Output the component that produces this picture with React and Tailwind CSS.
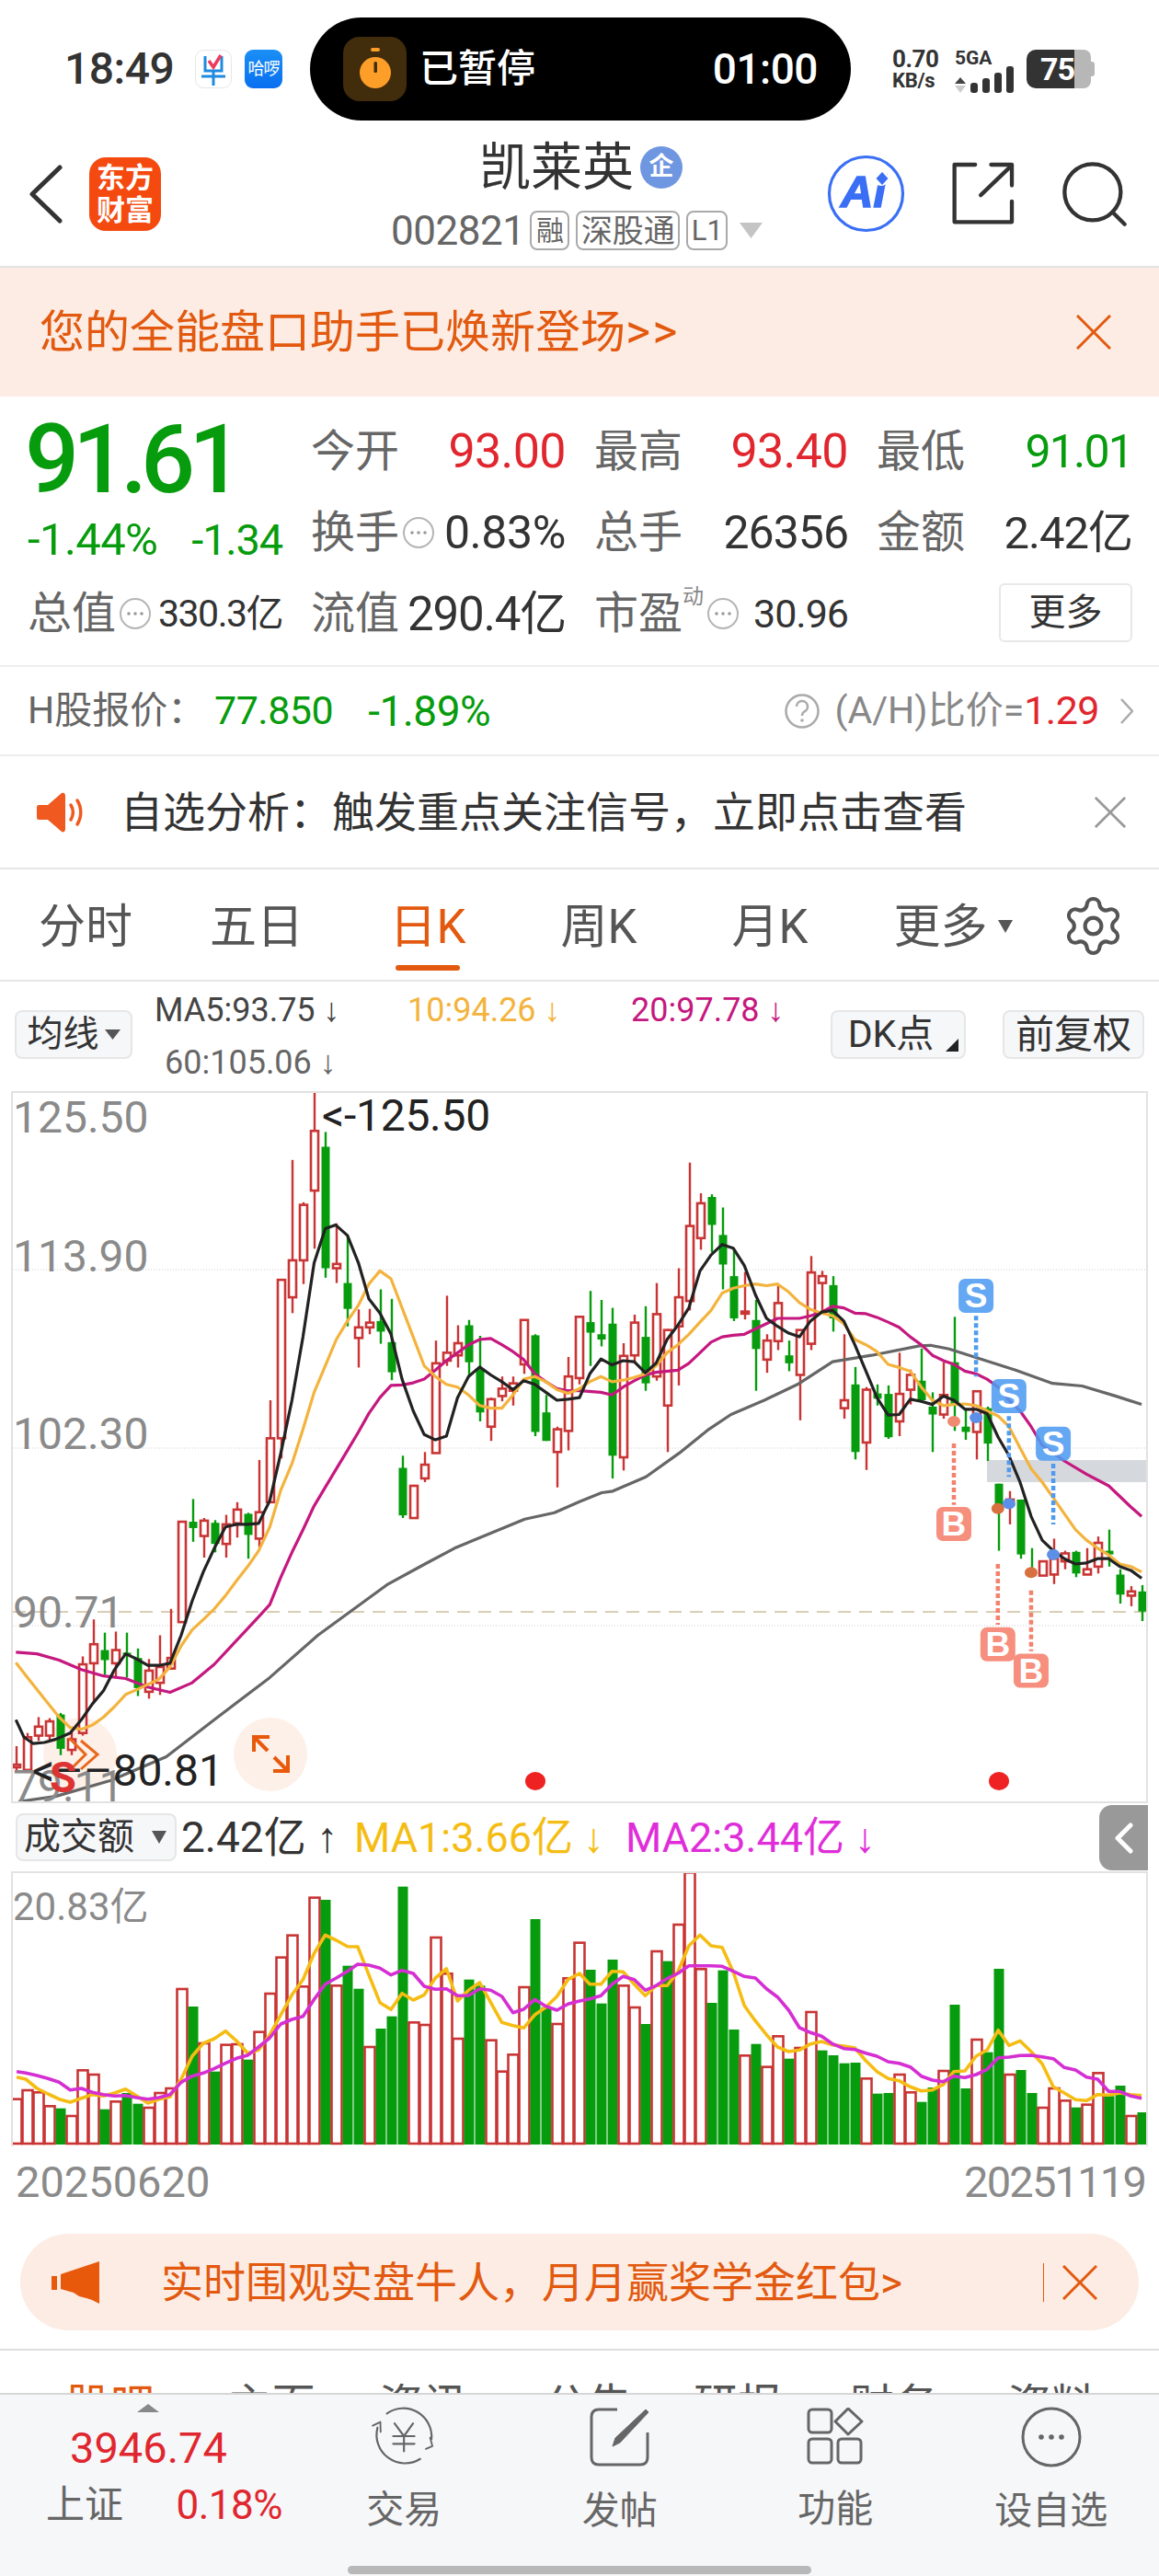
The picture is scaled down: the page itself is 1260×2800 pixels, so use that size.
import { Settings } from "lucide-react";

// [high, top, bottom, low, 1 = red / 0 = green], measured on the crops, x = 18 + 12 * index
const candles = [
  [1425,1460,1465,1475,1],[1400,1408,1470,1475,1],[1370,1388,1405,1415,1],[1372,1378,1405,1415,1],[1362,1365,1430,1442,0],
  [1395,1412,1432,1442,1],[1255,1270,1400,1405,1],[1185,1232,1268,1340,1],[1210,1243,1262,1290,0],[1208,1243,1268,1295,1],
  [1210,1248,1250,1295,0],[1240,1258,1315,1330,0],[1260,1282,1322,1335,1],[1215,1275,1305,1328,1],[1165,1258,1278,1280,1],
  [1000,1000,1190,1190,1],[957,1000,1012,1038,0],[993,998,1027,1068,1],[997,1002,1042,1058,0],[987,1005,1042,1068,1],
  [963,977,1003,1030,1],[983,985,1025,1070,0],[883,982,1032,1048,1],[770,842,963,965,1],[540,542,842,880,1],
  [315,505,575,605,1],[395,400,505,550,1],[185,260,373,483,1],[262,290,520,538,0],[435,512,520,548,1],
  [460,548,597,630,0],[598,632,652,708,1],[597,623,632,645,1],[560,620,640,663,0],[578,660,717,732,0],
  [875,898,988,993,0],[930,932,993,993,1],[868,892,918,925,1],[657,700,870,870,1],[572,680,695,705,1],
  [628,662,685,708,1],[618,628,698,725,0],[648,710,793,810,0],[765,768,820,847,1],[725,748,762,772,1],
  [725,738,752,780,1],[618,618,702,720,1],[645,647,830,838,0],[760,793,847,847,0],[820,825,868,935,1],
  [688,725,828,865,1],[612,612,728,740,1],[563,622,642,705,0],[580,645,655,668,0],[595,625,875,918,0],
  [662,686,878,903,1],[608,623,685,700,1],[592,650,738,752,0],[548,607,725,733,1],[635,637,780,868,1],
  [520,575,630,742,1],[320,440,582,600,1],[378,397,463,485,1],[380,385,438,490,0],[405,457,513,560,0],
  [485,535,615,620,0],[527,602,606,617,1],[580,618,673,752,0],[645,657,693,718,1],[553,586,658,675,1],
  [657,685,700,715,0],[637,637,722,808,1],[497,528,663,675,1],[525,535,548,605,1],[535,552,615,640,0],
  [645,770,785,805,1],[707,740,868,882,0],[745,750,850,902,1],[740,757,767,780,0],[742,758,840,843,0],
  [680,758,810,838,1],[712,722,750,778,1],[672,733,770,775,0],[755,782,797,868,0],[698,760,797,805,1],
  [612,698,778,828,0],[785,820,830,845,0],[752,753,830,882,1],[782,785,852,885,0],[928,928,975,1055,0],
  [942,958,968,1005,1],[958,958,1062,1070,0],[1050,1090,1103,1105,0],[1075,1075,1102,1102,1],[1032,1070,1100,1118,1],
  [1055,1060,1075,1090,1],[1055,1057,1098,1105,0],[1050,1090,1100,1100,1],[1028,1040,1085,1098,1],[1015,1055,1062,1085,0],
  [1090,1100,1138,1155,0],[1122,1132,1140,1160,1],[1120,1132,1170,1188,0],
];

// [top, 1 = red / 0 = green]
const volumes = [
  [962,1],[933,1],[940,1],[985,1],[995,0],[1017,1],[868,1],[882,1],[998,0],[970,1],[945,0],[980,0],[990,1],[942,1],[927,1],
  [603,1],[663,0],[780,1],[875,0],[785,1],[783,1],[836,0],[743,1],[618,1],[500,1],[428,1],[595,1],[305,1],[315,0],[592,1],
  [530,0],[605,0],[792,1],[735,0],[695,0],[272,0],[712,1],[720,1],[435,1],[553,1],[765,1],[575,0],[595,0],[770,1],[872,1],
  [817,1],[597,1],[378,0],[665,0],[717,1],[568,1],[452,1],[543,0],[653,0],[510,0],[592,1],[663,1],[720,0],[480,1],[515,0],
  [393,1],[223,1],[538,1],[651,0],[545,0],[738,0],[820,1],[785,0],[857,1],[757,1],[833,0],[795,1],[678,1],[806,0],[822,0],
  [848,0],[846,0],[895,1],[947,0],[945,0],[882,1],[940,1],[974,0],[927,0],[870,1],[657,0],[930,0],[768,1],[812,0],[540,0],
  [882,1],[870,0],[945,0],[990,1],[927,1],[967,1],[992,0],[980,1],[877,1],[955,0],[921,0],[1017,1],[1008,0],
];

const ma5L = "43,1375 65,1408 90,1420 120,1418 150,1412 190,1400 220,1375 250,1345 280,1320 310,1280 340,1250 370,1260 400,1272 430,1272 460,1268 490,1215 520,1150 550,1095 580,1050 610,1010 640,1005 670,1005 700,1003 730,960 760,870 790,770 820,650 850,510 880,445 908,438 940,458 970,510 998,578 1028,605 1058,645 1088,730 1118,790 1148,835 1178,845 1208,838 1238,765 1268,725 1298,707 1328,722 1358,735 1388,750 1417,733 1447,740 1477,755 1507,770 1537,768";
const ma5R = "0,765 28,720 58,692 88,703 118,695 148,697 178,718 207,700 237,655 266,628 296,595 326,525 356,495 386,475 416,482 446,515 476,570 506,615 536,630 566,643 595,650 625,620 655,603 685,600 715,620 745,665 775,715 805,765 835,798 865,797 895,768 925,772 955,778 985,762 1013,770 1043,787 1073,787 1103,795 1133,840 1162,875 1192,925 1222,990 1252,1035 1282,1055 1312,1070 1342,1080 1372,1078 1402,1070 1432,1070 1462,1085 1492,1092 1521,1107";
const ma10L = "43,1267 80,1300 120,1335 160,1370 190,1390 220,1393 250,1385 280,1370 310,1350 340,1327 370,1318 400,1308 430,1298 460,1275 490,1235 520,1205 550,1185 580,1165 610,1140 640,1112 670,1085 700,1055 730,1010 760,940 790,890 820,825 850,755 880,705 910,655 940,620 970,590 998,550 1028,525 1058,540 1088,595 1118,650 1148,705 1178,725 1208,740 1238,745 1268,760 1298,780 1328,785 1358,785 1388,760 1417,730 1447,725 1477,735 1507,750 1537,757";
const ma10R = "0,748 28,735 58,725 88,735 118,732 148,727 178,720 207,705 237,680 266,665 296,645 326,622 356,600 386,567 416,558 446,553 476,550 506,553 536,550 566,565 595,585 625,598 655,605 685,610 715,625 745,655 775,665 805,678 835,702 865,708 895,715 925,745 955,770 985,780 1013,778 1043,777 1073,780 1103,790 1133,800 1162,820 1192,860 1222,900 1252,925 1282,955 1312,985 1342,1015 1372,1035 1402,1050 1432,1063 1462,1080 1492,1085 1521,1095";
const ma20L = "43,1247 100,1250 160,1262 220,1280 280,1292 340,1297 400,1313 460,1323 520,1305 580,1270 640,1225 700,1180 730,1157 760,1105 790,1058 820,1015 850,970 880,935 910,900 940,865 970,830 998,795 1028,765 1058,742 1088,741 1118,737 1148,730 1178,713 1208,695 1238,680 1268,665 1298,655 1328,653 1358,665 1388,678 1417,693 1447,720 1477,735 1507,748 1537,752";
const ma20R = "0,752 58,755 88,760 118,745 148,733 178,722 207,717 266,713 296,700 326,680 356,660 386,650 416,647 446,645 476,635 506,625 536,615 595,615 625,610 655,603 685,592 715,595 745,605 775,606 805,613 835,622 865,632 895,650 925,665 955,685 985,695 1013,702 1043,715 1073,720 1103,730 1133,745 1162,770 1192,790 1222,820 1252,855 1282,870 1312,885 1372,910 1432,932 1462,952 1492,972 1521,990";
const ma60L = "50,1530 150,1520 300,1490 450,1445 580,1375 730,1295 860,1215 1050,1118 1150,1080 1230,1050 1420,995 1500,983";
const ma60R = "0,962 60,945 90,942 180,915 270,870 350,825 410,797 500,770 590,740 685,697 790,685 920,667 950,666 1000,673 1090,693 1180,713 1280,738 1360,743 1450,762 1521,778";

const ma1L = "45,893 70,900 100,930 130,948 160,965 190,975 220,962 250,950 280,955 310,945 340,932 370,955 400,978 430,965 460,958 490,900 520,825 550,783 580,768 610,743 640,775 670,815 700,805 730,755 760,690 790,625 820,575 850,490 880,430 910,447 940,467 968,468 998,560 1028,650 1058,673 1088,620 1118,642 1148,625 1178,570 1208,540 1238,645 1268,610 1298,585 1328,650 1358,715 1388,725 1417,733 1447,690 1477,665 1507,630 1537,575";
const ma1R = "0,555 28,590 58,590 88,548 118,550 148,590 178,628 207,595 237,595 266,550 296,465 326,430 356,465 386,470 416,550 446,660 476,710 506,755 536,795 566,810 595,805 625,785 655,777 685,788 715,792 745,798 775,840 805,875 835,898 865,905 895,925 925,938 955,935 985,917 1013,875 1043,873 1073,825 1103,805 1133,740 1162,790 1192,775 1222,810 1252,850 1282,925 1312,945 1342,967 1372,970 1402,950 1432,952 1462,945 1492,950 1521,953";
const ma2L = "45,875 70,880 100,888 130,898 160,910 190,935 220,930 250,943 280,950 310,955 340,953 370,960 400,965 430,960 460,950 490,910 520,890 550,880 580,865 610,848 640,832 670,822 700,795 730,765 760,720 790,705 820,695 850,640 880,590 910,570 940,548 968,525 998,528 1028,538 1058,560 1088,545 1118,555 1148,597 1178,607 1208,605 1238,628 1268,627 1298,605 1328,610 1358,630 1388,683 1417,672 1447,640 1477,662 1507,675 1537,655";
const ma2R = "0,645 28,638 58,628 88,590 118,565 148,575 178,610 207,595 237,572 266,555 296,530 326,530 356,530 386,532 416,548 446,565 476,570 506,605 536,632 566,675 595,732 625,748 655,760 685,785 715,800 745,803 775,815 805,825 835,843 865,848 895,860 925,890 955,903 985,908 1013,890 1043,895 1073,885 1103,868 1133,830 1162,828 1192,823 1222,822 1252,827 1282,833 1312,862 1342,870 1372,893 1402,900 1432,940 1462,940 1492,955 1521,962";

const kY = (z) => 1080 + z / 1.742;
const kXL = (z) => z / 2.489;
const kXR = (z) => 630 + z / 2.489;
const vY = (z) => 1960 + z / 3;

function linePoints(left, right, toY) {
  const conv = (str, toX) =>
    str.split(" ").map((p) => {
      const [x, y] = p.split(",").map(Number);
      return `${toX(x).toFixed(1)},${toY(y).toFixed(1)}`;
    });
  return [...conv(left, kXL), ...conv(right, kXR)].join(" ");
}

function KLine({ left, right, color }) {
  return <polyline points={linePoints(left, right, kY)} fill="none" stroke={color} strokeWidth="3.2" strokeLinejoin="round" />;
}

function VolLine({ left, right, color }) {
  return <polyline points={linePoints(left, right, vY)} fill="none" stroke={color} strokeWidth="3.6" strokeLinejoin="round" />;
}

function Signal({ zx, top, label, fill, from, to, dot, dotFill }) {
  const x = kXR(zx);
  const y = kY(top);
  return (
    <g>
      <line x1={x} x2={x} y1={kY(from)} y2={kY(to)} stroke={fill} strokeWidth="4.5" strokeDasharray="5 3" />
      <ellipse cx={x} cy={kY(dot)} rx="7" ry="6" fill={dotFill} />
      <rect x={x - 19} y={y} width="38" height="37" rx="7" fill={fill} fillOpacity="0.88" />
      <text x={x} y={y + 31} textAnchor="middle" fontSize="37" fontWeight="700" fill="#fff" fontFamily="Liberation Sans">{label}</text>
    </g>
  );
}

function CandleChart() {
  return (
    <svg className="absolute inset-0 block" width="1232" height="770" viewBox="14 1188 1232 770">
      <circle cx="87" cy="1907" r="40" fill="#fdf0e8" />
      <circle cx="294" cy="1907" r="40" fill="#fdf0e8" />
      {[1380, 1574, 1767].map((y) => (
        <line key={y} x1="14" x2="1246" y1={y} y2={y} stroke="#ccc" strokeWidth="1" strokeDasharray="1 2" />
      ))}
      <line x1="14" x2="1246" y1="1752" y2="1752" stroke="#d9ceb6" strokeWidth="2" strokeDasharray="14 9" />
      <rect x="1073" y="1587" width="174" height="24" fill="#d5d8dc" />
      {candles.map(([hi, top, bot, low, up], i) => {
        const x = 18 + 12 * i;
        const color = up ? "#c93434" : "#079c0d";
        return (
          <g key={i}>
            <line x1={x} x2={x} y1={kY(hi)} y2={kY(low)} stroke={color} strokeWidth="2.4" />
            <rect
              x={x - (up ? 4 : 4.5)}
              y={kY(top)}
              width={up ? 8 : 9}
              height={Math.max(kY(bot) - kY(top), 2)}
              fill={up ? "#fff" : color}
              stroke={up ? color : "none"}
              strokeWidth="2.6"
            />
          </g>
        );
      })}
      <KLine left={ma60L} right={ma60R} color="#666" />
      <KLine left={ma20L} right={ma20R} color="#c5187f" />
      <KLine left={ma10L} right={ma10R} color="#f3b33d" />
      <KLine left={ma5L} right={ma5R} color="#222" />
      <Signal zx={1073} top={540} label="S" fill="#4f9bf0" from={610} to={725} dot={803} dotFill="#5b8fe8" />
      <Signal zx={1162} top={730} label="S" fill="#4f9bf0" from={800} to={915} dot={966} dotFill="#5b8fe8" />
      <Signal zx={1282} top={820} label="S" fill="#4f9bf0" from={890} to={1005} dot={1062} dotFill="#5b8fe8" />
      <Signal zx={1013} top={972} label="B" fill="#f5806c" from={852} to={968} dot={810} dotFill="#ef8a70" />
      <Signal zx={1132} top={1200} label="B" fill="#f5806c" from={1080} to={1195} dot={975} dotFill="#d8703f" />
      <Signal zx={1222} top={1250} label="B" fill="#f5806c" from={1130} to={1245} dot={1096} dotFill="#d8703f" />
      <ellipse cx="582" cy="1936" rx="11" ry="10" fill="#ee2222" />
      <ellipse cx="1086" cy="1936" rx="11" ry="10" fill="#ee2222" />
      <polyline points="75,1889 93,1907 76,1924" fill="none" stroke="#e8671b" strokeWidth="3" />
      <polyline points="88,1892 106,1907 88,1923" fill="none" stroke="#e8671b" strokeWidth="3" />
      <g fill="none" stroke="#e8590c" strokeWidth="4">
        <polyline points="293,1888 276,1888 276,1904" />
        <line x1="276" y1="1888" x2="291" y2="1903" />
        <polyline points="297,1925 313,1925 313,1908" />
        <line x1="313" y1="1925" x2="298" y2="1910" />
      </g>
    </svg>
  );
}

function VolumeChart() {
  const base = 2331;
  return (
    <svg className="absolute inset-0 block" width="1232" height="297" viewBox="14 2036 1232 297">
      {volumes.map(([top, up], i) => {
        const x = 18 + 12 * i;
        const y = vY(top);
        return up ? (
          <rect key={i} x={x - 5.5} y={y + 1} width="11" height={base - y - 2} fill="#fff" stroke="#c93434" strokeWidth="2.6" />
        ) : (
          <rect key={i} x={x - 5.5} y={y} width="11" height={base - y} fill="#079c0d" />
        );
      })}
      <VolLine left={ma1L} right={ma1R} color="#f5bd13" />
      <VolLine left={ma2L} right={ma2R} color="#d52ed3" />
    </svg>
  );
}

function XMark({ color, className }) {
  return (
    <svg className={className} viewBox="0 0 38 38" fill="none" stroke={color} strokeWidth="3">
      <line x1="1" y1="1" x2="37" y2="37" />
      <line x1="37" y1="1" x2="1" y2="37" />
    </svg>
  );
}

function MoreDot() {
  return (
    <svg className="w-[36px] h-[36px] shrink-0" viewBox="0 0 36 36">
      <circle cx="18" cy="18" r="16" fill="none" stroke="#b5b5b5" strokeWidth="2" />
      <circle cx="11" cy="18" r="1.8" fill="#999" />
      <circle cx="18" cy="18" r="1.8" fill="#999" />
      <circle cx="25" cy="18" r="1.8" fill="#999" />
    </svg>
  );
}

function Arrow({ children }) {
  return <span className="font-[family-name:'Liberation_Sans',sans-serif]">{children}</span>;
}

function Stat({ label, value, valueClass, dot, sup }) {
  return (
    <div className="flex items-center justify-between">
      <div className="flex items-center">
        <span className="text-[48px] leading-none text-[#666]">{label}</span>
        {sup && <span className="text-[23px] leading-none text-[#888] self-start -mt-[6px]">{sup}</span>}
        {dot && <span className="ml-[3px] flex"><MoreDot /></span>}
      </div>
      <span className={valueClass}>{value}</span>
    </div>
  );
}

function ToolBtn({ children, className }) {
  return (
    <div className={`flex items-center justify-center h-[53px] rounded-[8px] bg-[#f6f7f9] border-2 border-[#e6e6e6] text-[#333] ${className}`}>
      {children}
    </div>
  );
}

export default function App() {
  const num = "text-[50px] leading-none tracking-[-1px]";
  const numBig = "text-[52px] leading-none tracking-[-0.6px]";
  const tabs = ["分时", "五日", "日K", "周K", "月K"];
  const axis = "absolute left-0 text-[48px] leading-none text-[#8a8a8a]";

  return (
    <div className="w-[1260px] h-[2800px] overflow-hidden bg-white flex flex-col font-[family-name:Roboto,'Noto_Sans_CJK_SC',sans-serif] text-[#333]">
      {/* status bar */}
      <div className="h-[150px] shrink-0 flex items-center pl-[70px]">
        <span className="text-[48px] leading-none font-medium text-[#333] w-[121px] tracking-[-0.5px]">18:49</span>
        <svg className="ml-[21px] w-[40px] h-[42px]" viewBox="0 0 40 42">
          <rect x="0.5" y="0.5" width="39" height="41" rx="9" fill="#fff" stroke="#e6e6e6" />
          <g fill="none" stroke="#1f8be0" strokeWidth="3">
            <path d="M11 7 v16 h18 v-16" />
            <path d="M7 29 h26 M20 23 v16" />
          </g>
          <path d="M15 12 l5 7 l8 -13" fill="none" stroke="#ee3a5a" strokeWidth="3.5" />
        </svg>
        <div className="ml-[14px] w-[41px] h-[42px] rounded-[9px] bg-gradient-to-b from-[#1b8ff5] to-[#0a6ff0] flex items-center justify-center text-white text-[18px] leading-none tracking-[-1px]">哈啰</div>
        <div className="ml-[30px] w-[588px] h-[112px] rounded-full bg-black shrink-0 flex items-center pl-[36px] pr-[36px] text-white">
          <div className="w-[69px] h-[70px] rounded-[18px] bg-[#412c0c] flex items-center justify-center">
            <svg className="w-[40px] h-[46px]" viewBox="0 0 40 46">
              <rect x="15" y="0" width="10" height="4" rx="2" fill="#fd9e28" />
              <circle cx="20" cy="27" r="17" fill="#fd9e28" />
              <rect x="18.5" y="15" width="3.5" height="12" rx="1.5" fill="#412c0c" />
            </svg>
          </div>
          <span className="ml-[14px] text-[42px] leading-none font-medium">已暂停</span>
          <span className="ml-auto text-[46px] leading-none font-medium tracking-[-0.5px]">01:00</span>
        </div>
        <div className="ml-[45px] w-[52px] flex flex-col font-bold text-[#333]">
          <span className="text-[26px] leading-[26px] tracking-[-0.5px]">0.70</span>
          <span className="text-[22px] leading-[22px] tracking-[-0.3px]">KB/s</span>
        </div>
        <div className="ml-[16px] w-[66px] h-[42px] flex flex-col justify-between">
          <span className="text-[21px] leading-[18px] font-bold text-[#333]">5GA</span>
          <div className="flex items-end gap-[5px]">
            <svg className="w-[12px] h-[17px]" viewBox="0 0 12 17">
              <path d="M6 0 L12 7 H0 Z" fill="#444" />
              <path d="M6 17 L12 9 H0 Z" fill="#ccc" />
            </svg>
            <div className="w-[8px] h-[11px] rounded-[3px] bg-[#333]" />
            <div className="w-[8px] h-[16px] rounded-[3px] bg-[#333]" />
            <div className="w-[8px] h-[22px] rounded-[3px] bg-[#333]" />
            <div className="w-[8px] h-[29px] rounded-[3px] bg-[#333]" />
          </div>
        </div>
        <div className="ml-[12px] flex items-center">
          <div className="w-[52px] h-[42px] rounded-l-[10px] bg-[#333] flex items-center justify-end overflow-hidden text-white font-bold text-[34px] leading-none tracking-[-1px]">75</div>
          <div className="w-[18px] h-[42px] rounded-r-[8px] bg-[#b7b7b7]" />
          <div className="w-[4px] h-[16px] rounded-r-[3px] bg-[#b7b7b7]" />
        </div>
      </div>

      {/* header */}
      <div className="h-[141px] shrink-0 flex items-center pb-[18px] border-b-2 border-[#e2e2e2]">
        <div className="w-[426px] shrink-0 flex items-center pl-[32px]">
          <svg className="w-[36px] h-[64px]" viewBox="0 0 36 64" fill="none" stroke="#333" strokeWidth="5" strokeLinecap="round" strokeLinejoin="round">
            <polyline points="33,3 3,32 33,61" />
          </svg>
          <div className="ml-[29px] w-[78px] h-[80px] rounded-[18px] bg-[#f4490f] flex flex-col items-center justify-center text-white font-bold text-[31px] leading-[35px]">
            <span>东方</span>
            <span>财富</span>
          </div>
        </div>
        <div className="w-[472px] shrink-0 flex flex-col mt-[8px]">
          <div className="flex items-center pl-[95px]">
            <span className="text-[56px] leading-[50px] text-[#333]">凯莱英</span>
            <span className="ml-[7px] w-[46px] h-[46px] rounded-full bg-[#6f96e0] flex items-center justify-center text-white text-[27px] font-bold leading-none">企</span>
          </div>
          <div className="mt-[22px] flex items-center">
            <span className="-ml-[1px] text-[44px] leading-none text-[#666] tracking-[-0.5px]">002821</span>
            <span className="ml-[6px] w-[43px] h-[43px] border-2 border-[#aaa] rounded-[8px] flex items-center justify-center text-[30px] leading-none text-[#666]">融</span>
            <span className="ml-[7px] w-[113px] h-[43px] border-2 border-[#aaa] rounded-[8px] flex items-center justify-center text-[34px] leading-none text-[#666]">深股通</span>
            <span className="ml-[7px] w-[45px] h-[43px] border-2 border-[#aaa] rounded-[8px] flex items-center justify-center text-[31px] leading-none text-[#666]">L1</span>
            <svg className="ml-[13px] w-[25px] h-[17px]" viewBox="0 0 25 17"><path d="M0 0 H25 L12.5 17 Z" fill="#c4c4c4" /></svg>
          </div>
        </div>
        <svg className="w-[87px] h-[87px]" viewBox="0 0 87 87">
          <circle cx="43.5" cy="43.5" r="40" fill="none" stroke="#3a6ff5" strokeWidth="3.2" />
          <text x="16" y="58" fontSize="49" fontWeight="700" fontStyle="italic" fill="#3a6ff5" stroke="#3a6ff5" strokeWidth="1.6" fontFamily="Liberation Sans">Ai</text>
          <circle cx="60" cy="27" r="8" fill="#fff" />
          <path d="M61 20 l6.5 7 l-6.5 7 l-6.5 -7 Z" fill="#3a6ff5" />
        </svg>
        <svg className="ml-[47px] w-[73px] h-[73px]" viewBox="455 435 220 220" fill="none" stroke="#333" strokeWidth="13" strokeLinecap="round" strokeLinejoin="round">
          <polyline points="540,450 472,450 472,638 660,638 660,570" />
          <line x1="558" y1="550" x2="660" y2="452" />
          <polyline points="592,450 660,450 660,518" />
        </svg>
        <svg className="ml-[48px] w-[73px] h-[73px]" viewBox="820 430 220 220" fill="none" stroke="#333" strokeWidth="13" strokeLinecap="round">
          <circle cx="925" cy="535" r="92" />
          <line x1="990" y1="600" x2="1030" y2="640" />
        </svg>
      </div>

      {/* upgrade banner */}
      <div className="h-[140px] shrink-0 bg-[#fcece4] flex items-center justify-between pl-[43px] pr-[52px]">
        <span className="text-[49px] leading-none text-[#e2590f]">您的全能盘口助手已焕新登场<span className="text-[52px] tracking-[2px]">&gt;&gt;</span></span>
        <XMark color="#e2590f" className="w-[38px] h-[38px]" />
      </div>

      {/* quote */}
      <div className="h-[294px] shrink-0 pt-[16px] border-b-2 border-[#eee]">
        <div className="grid grid-cols-[277px_277px_276px_278px] grid-rows-[88px_88px_88px] gap-x-[31px] pl-[30px] items-center">
          <div className="row-span-2 self-start">
            <div className="-ml-[3px] text-[104px] leading-[84px] mt-[11px] text-[#079c0d] font-medium tracking-[-7px]">91.61</div>
            <div className="mt-[20px] flex justify-between items-center leading-none text-[#079c0d]">
              <span className="text-[49px] tracking-[-0.6px]">-1.44%</span>
              <span className="text-[47px] tracking-[-1.2px]">-1.34</span>
            </div>
          </div>
          <Stat label="今开" value="93.00" valueClass={`${numBig} text-[#e0262e]`} />
          <Stat label="最高" value="93.40" valueClass={`${numBig} text-[#e0262e]`} />
          <Stat label="最低" value="91.01" valueClass="text-[50px] leading-none tracking-[-1.8px] text-[#079c0d]" />
          <Stat label="换手" dot value="0.83%" valueClass="text-[50px] leading-none tracking-[-0.4px] text-[#333]" />
          <Stat label="总手" value="26356" valueClass={`${num} text-[#333]`} />
          <Stat label="金额" value="2.42亿" valueClass="text-[49px] leading-none tracking-[-1px] text-[#333]" />
          <Stat label="总值" dot value="330.3亿" valueClass="text-[41px] leading-none tracking-[-1.5px] text-[#333]" />
          <Stat label="流值" value="290.4亿" valueClass="text-[51px] leading-none tracking-[-1.2px] text-[#333]" />
          <Stat label="市盈" sup="动" dot value="30.96" valueClass="text-[43px] leading-none tracking-[-1px] text-[#333]" />
          <div className="flex justify-end -mt-[3px]">
            <div className="w-[145px] h-[64px] rounded-[6px] border-2 border-[#e8e8e8] flex items-center justify-center text-[40px] leading-none text-[#333]">更多</div>
          </div>
        </div>
      </div>

      {/* A/H row */}
      <div className="h-[97px] shrink-0 flex items-center pl-[30px] pr-[28px] border-b-2 border-[#eee]">
        <span className="w-[203px] text-[41px] leading-none text-[#666]">{"H股报价\uFF1A"}</span>
        <span className="text-[43px] leading-none text-[#079c0d] tracking-[-0.5px]">77.850</span>
        <span className="ml-[38px] text-[46px] leading-none text-[#079c0d] tracking-[-0.5px]">-1.89%</span>
        <svg className="ml-auto w-[40px] h-[40px]" viewBox="0 0 40 40">
          <circle cx="20" cy="20" r="17.5" fill="none" stroke="#aaa" strokeWidth="2.5" />
          <path d="M14 15 a6 6 0 1 1 8.5 5.5 c-2 1 -2.5 2 -2.5 4.5" fill="none" stroke="#aaa" strokeWidth="2.5" />
          <circle cx="20" cy="30" r="1.8" fill="#aaa" />
        </svg>
        <span className="ml-[15px] text-[41px] leading-none text-[#888]">(A/H)比价=</span>
        <span className="text-[43px] leading-none text-[#e0262e] tracking-[-0.5px]">1.29</span>
        <svg className="ml-[23px] w-[14px] h-[28px]" viewBox="0 0 14 28" fill="none" stroke="#aaa" strokeWidth="2.5"><polyline points="1,1 13,14 1,27" /></svg>
      </div>

      {/* notice */}
      <div className="h-[123px] shrink-0 flex items-center pl-[40px] pr-[36px] border-b-2 border-[#e6e6e6]">
        <svg className="w-[52px] h-[44px]" viewBox="0 0 52 44">
          <path d="M2 14 h10 L27 1 c2 -1 4 0 4 3 v36 c0 3 -2 4 -4 3 L12 30 H2 c-1 0 -2 -1 -2 -2 V16 c0 -1 1 -2 2 -2 Z" fill="#f0591f" />
          <path d="M37 14 c3 5 3 11 0 16 M44 9 c5 8 5 18 0 26" fill="none" stroke="#f0591f" strokeWidth="3.5" strokeLinecap="round" />
        </svg>
        <span className="ml-[39px] text-[46px] leading-none text-[#333]">{"自选分析\uFF1A触发重点关注信号\uFF0C立即点击查看"}</span>
        <XMark color="#999" className="ml-auto w-[34px] h-[34px]" />
      </div>

      {/* period tabs */}
      <div className="h-[122px] shrink-0 flex items-start border-b-2 border-[#e6e6e6]">
        <div className="w-[1116px] grid grid-cols-6 pt-[32px]">
          {tabs.map((t) => (
            <div key={t} className="flex flex-col items-center">
              <span className={`h-[60px] flex items-center text-[51px] leading-none ${t === "日K" ? "text-[#e2590f]" : "text-[#555]"}`}>{t}</span>
              {t === "日K" && <div className="mt-[12px] w-[70px] h-[6px] rounded-full bg-[#e2590f]" />}
            </div>
          ))}
          <div className="flex items-center justify-center h-[60px]">
            <span className="ml-[26px] text-[51px] leading-none text-[#555]">更多</span>
            <svg className="ml-[11px] w-[16px] h-[16px]" viewBox="0 0 16 16"><path d="M0 1 H16 L8 15 Z" fill="#555" /></svg>
          </div>
        </div>
        <Settings className="ml-[37px] mt-[26px] w-[71px] h-[71px] text-[#555]" strokeWidth={1.4} />
      </div>

      {/* chart toolbar */}
      <div className="h-[119px] shrink-0 flex items-start pt-[11px] pl-[16px]">
        <ToolBtn className="mt-[20px] w-[128px] text-[39px] leading-none gap-[6px]">
          <span>均线</span>
          <svg className="w-[17px] h-[11px]" viewBox="0 0 17 11"><path d="M0 0 H17 L8.5 11 Z" fill="#555" /></svg>
        </ToolBtn>
        <div className="ml-[24px] w-[708px] grid grid-cols-[275px_243px_190px] gap-y-[17px] text-[36px] leading-[40px]">
          <span className="text-[#444]">MA5:93.75 <Arrow>↓</Arrow></span>
          <span className="text-[#f3b33d]">10:94.26 <Arrow>↓</Arrow></span>
          <span className="text-[#c5187f]">20:97.78 <Arrow>↓</Arrow></span>
          <span className="pl-[11px] text-[#666]">60:105.06 <Arrow>↓</Arrow></span>
        </div>
        <ToolBtn className="ml-[27px] mt-[20px] w-[147px] text-[41px] leading-none relative pr-[16px]">
          <span>DK点</span>
          <svg className="absolute right-[6px] bottom-[6px] w-[14px] h-[14px]" viewBox="0 0 14 14"><path d="M14 0 V14 H0 Z" fill="#222" /></svg>
        </ToolBtn>
        <ToolBtn className="ml-[40px] mt-[20px] w-[154px] text-[42px] leading-none">前复权</ToolBtn>
      </div>

      {/* candle chart */}
      <div className="relative ml-[12px] w-[1236px] h-[774px] shrink-0 border-2 border-[#e2e2e2]">
        <CandleChart />
        <span className={`${axis} top-[3px]`}>125.50</span>
        <span className={`${axis} top-[154px]`}>113.90</span>
        <span className={`${axis} top-[347px]`}>102.30</span>
        <span className={`${axis} top-[541px]`}>90.71</span>
        <span className={`${axis} top-[730px]`}>79.11</span>
        <span className="absolute left-[336px] top-[1px] text-[48px] leading-none tracking-[-0.3px] text-[#222]">&lt;-125.50</span>
        <span className="absolute left-[21px] top-[713px] text-[48px] leading-none text-[#222]">&lt;––80.81</span>
        <span className="absolute left-[40px] top-[720px] text-[47px] leading-none font-bold text-[#d33]">S</span>
      </div>

      {/* volume header */}
      <div className="h-[74px] shrink-0 flex items-center pl-[17px]">
        <div className="w-[175px] h-[52px] rounded-[8px] bg-[#f6f7f9] border-2 border-[#e6e6e6] flex items-center pl-[7px] text-[40px] leading-none text-[#333]">
          <span>成交额</span>
          <svg className="ml-[19px] w-[16px] h-[14px]" viewBox="0 0 16 14"><path d="M0 0 H16 L8 14 Z" fill="#555" /></svg>
        </div>
        <span className="w-[193px] pl-[5px] text-[46px] leading-none text-[#333]">2.42亿 <Arrow>↑</Arrow></span>
        <span className="w-[295px] text-[45px] leading-none text-[#f5bd13]">MA1:3.66亿 <Arrow>↓</Arrow></span>
        <span className="text-[45px] leading-none text-[#df2ed9]">MA2:3.44亿 <Arrow>↓</Arrow></span>
        <div className="ml-auto mr-[12px] w-[53px] h-[71px] rounded-l-[14px] bg-[#999] flex items-center justify-center self-start mt-[2px]">
          <svg className="w-[22px] h-[34px]" viewBox="0 0 22 34" fill="none" stroke="#fff" strokeWidth="5" strokeLinecap="round" strokeLinejoin="round"><polyline points="18,3 4,17 18,31" /></svg>
        </div>
      </div>

      {/* volume chart */}
      <div className="relative ml-[12px] w-[1236px] h-[299px] shrink-0 border-2 border-b-0 border-[#e2e2e2]">
        <VolumeChart />
        <span className="absolute left-0 top-[16px] text-[42px] leading-none text-[#8a8a8a]">20.83亿</span>
      </div>

      {/* dates */}
      <div className="h-[95px] shrink-0 flex items-center justify-between pl-[17px] pr-[15px] pb-[18px] text-[47px] leading-none text-[#8a8a8a]">
        <span>20250620</span>
        <span className="tracking-[-1.8px]">20251119</span>
      </div>

      {/* promo */}
      <div className="mx-[22px] h-[105px] shrink-0 rounded-full bg-[#fcece3] flex items-center pl-[34px]">
        <svg className="w-[54px] h-[46px]" viewBox="0 0 54 46">
          <rect x="0" y="16" width="6" height="15" fill="#e8590c" />
          <path d="M10 14 L52 0 V46 L44 42 L38 40 L30 38 L24 34 L10 30 Z" fill="#e8590c" />
        </svg>
        <span className="ml-[65px] text-[46px] leading-none text-[#e2590f]">{"实时围观实盘牛人\uFF0C月月赢奖学金红包>"}</span>
        <div className="ml-auto w-[1px] h-[42px] bg-[#e2590f]" />
        <XMark color="#e2590f" className="ml-[20px] mr-[45px] w-[38px] h-[38px]" />
      </div>

      {/* section tabs, cut off by the bottom bar */}
      <div className="mt-[20px] h-[48px] shrink-0 border-t-2 border-[#dedede] overflow-hidden relative">
        <div className="grid grid-cols-[175px_165px_179px_163px_170px_171px_100px] pl-[72px] pt-[36px] text-[48px] leading-none text-[#555]">
          <span className="text-[#e2590f]">股吧</span>
          <span>主页</span>
          <span>资讯</span>
          <span>公告</span>
          <span>研报</span>
          <span>财务</span>
          <span>资料</span>
        </div>
      </div>

      {/* bottom bar */}
      <div className="flex-1 bg-[#f6f7f9] border-t-2 border-[#d6d6d6] flex flex-col">
        <div className="flex h-[186px]">
          <div className="ml-[50px] w-[257px] shrink-0 flex flex-col pt-[10px]">
            <svg className="ml-[99px] w-[24px] h-[9px]" viewBox="0 0 24 9"><path d="M12 0 L24 9 H0 Z" fill="#888" /></svg>
            <span className="mt-[20px] ml-[26px] text-[47px] leading-[38px] text-[#e0262e]">3946.74</span>
            <div className="mt-[21px] flex items-center justify-between">
              <span className="text-[42px] leading-none text-[#666]">上证</span>
              <span className="text-[44px] leading-none text-[#e0262e] tracking-[-0.5px]">0.18%</span>
            </div>
          </div>
          <div className="ml-[15px] w-[938px] grid grid-cols-4">
            <div className="flex flex-col items-center pt-[11px]">
              <svg className="w-[78px] h-[68px]" viewBox="1195 95 245 220" fill="none" stroke="#666" strokeWidth="7" strokeLinecap="round" strokeLinejoin="round">
                <path d="M1258 125 A100 100 0 0 1 1415 215" />
                <path d="M1395 250 L1418 240 L1410 210" strokeWidth="6" />
                <path d="M1375 285 A100 100 0 0 1 1225 175" />
                <path d="M1208 168 L1235 155 L1236 190" strokeWidth="6" />
                <path d="M1285 160 L1318 205 L1350 160 M1280 205 H1355 M1280 232 H1355 M1318 205 V258" />
              </svg>
              <span className="mt-[26px] text-[41px] leading-none text-[#666]">交易</span>
            </div>
            <div className="flex flex-col items-center pt-[13px]">
              <svg className="w-[66px] h-[66px]" viewBox="0 0 66 66" fill="none" stroke="#666" strokeWidth="3">
                <path d="M30 3 H10 Q2 3 2 11 V55 Q2 63 10 63 H55 Q63 63 63 55 V28" />
                <path d="M61 3 L64 6 L33 39 L25 43 L28 34 Z" fill="#666" strokeWidth="1" />
              </svg>
              <span className="mt-[27px] text-[41px] leading-none text-[#666]">发帖</span>
            </div>
            <div className="flex flex-col items-center pt-[14px]">
              <svg className="w-[62px] h-[62px]" viewBox="0 0 62 62" fill="none" stroke="#666" strokeWidth="3">
                <rect x="2" y="2" width="25" height="25" rx="4" />
                <path d="M45 1 L60 15 L45 29 L31 15 Z" strokeLinejoin="round" />
                <rect x="2" y="34" width="25" height="26" rx="4" />
                <rect x="34" y="34" width="25" height="26" rx="4" />
              </svg>
              <span className="mt-[28px] text-[41px] leading-none text-[#666]">功能</span>
            </div>
            <div className="flex flex-col items-center pt-[13px]">
              <svg className="w-[66px] h-[66px]" viewBox="0 0 66 66">
                <circle cx="33" cy="33" r="31" fill="none" stroke="#666" strokeWidth="3" />
                <circle cx="22" cy="33" r="2.8" fill="#666" />
                <circle cx="33" cy="33" r="2.8" fill="#666" />
                <circle cx="44" cy="33" r="2.8" fill="#666" />
              </svg>
              <span className="mt-[27px] text-[41px] leading-none text-[#666]">设自选</span>
            </div>
          </div>
        </div>
        <div className="ml-[378px] w-[504px] h-[9px] rounded-full bg-[#b8b8b8]" />
      </div>
    </div>
  );
}
